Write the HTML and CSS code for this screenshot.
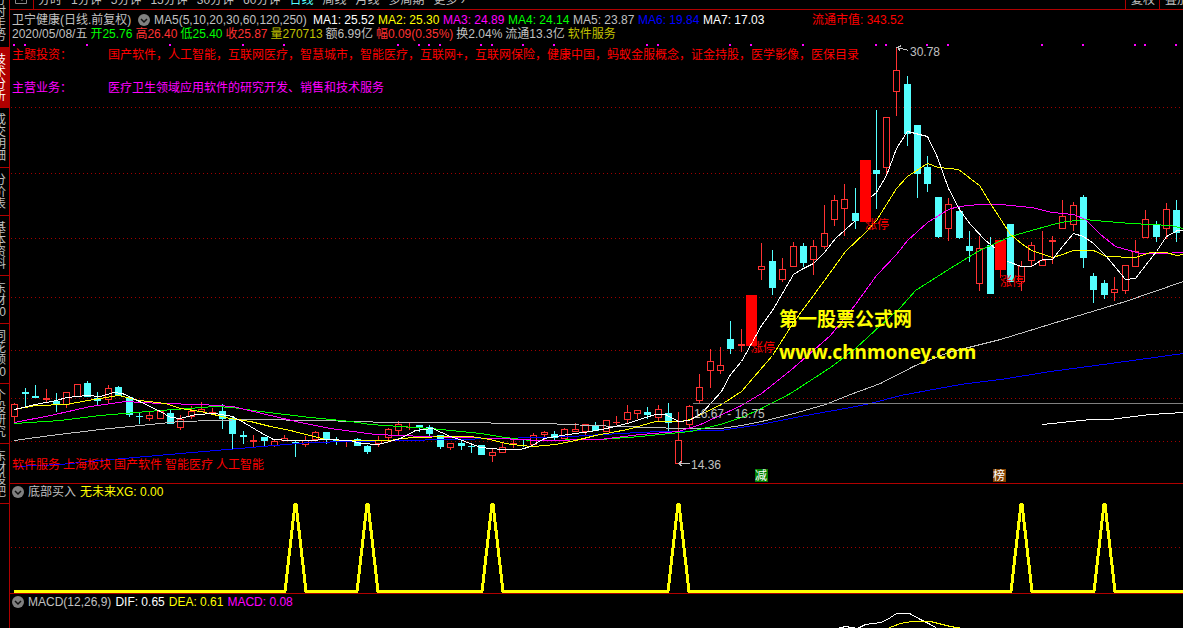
FILE: index.html
```html
<!DOCTYPE html>
<html lang="zh-CN">
<head>
<meta charset="utf-8">
<title>卫宁健康 日线</title>
<link rel="stylesheet" href="styles.css">
</head>
<body>
<div class="app">
  <nav class="side">
    <a href="#" class="side-item">分时走势</a>
    <a href="#" class="side-item active">技术分析</a>
    <a href="#" class="side-item">成交明细</a>
    <a href="#" class="side-item">分价表</a>
    <a href="#" class="side-item">基本资料</a>
    <a href="#" class="side-item">东财0</a>
    <a href="#" class="side-item">同花顺0</a>
    <a href="#" class="side-item">个股研究</a>
    <a href="#" class="side-item">东财股吧</a>
  </nav>
  <main class="main">
    <div class="toolbar">
      <button class="tool-icon" aria-label="窗口"><svg width="12" height="12" viewBox="0 0 12 12"><path d="M.5 0V11.5H11.5V0M3 7.5H8M7 5V9" fill="none" stroke="#888"/></svg></button>
      <div class="periods">
        <button>分时</button><button>1分钟</button><button>5分钟</button><button>15分钟</button><button>30分钟</button><button>60分钟</button><button class="on">日线</button><button>周线</button><button>月线</button><button>多周期</button><button>更多 ›</button>
      </div>
      <div class="adjust"><button>复权</button><button>叠加</button></div>
    </div>

    <section class="panel price">
      <svg class="plot" id="price" viewBox="10 10 1173 473" shape-rendering="crispEdges"></svg>
      <div class="overlay">
        <div class="row ma">
          <span class="name">卫宁健康(日线.前复权)</span>
          <button class="drop" aria-label="指标菜单"><svg width="12" height="12" viewBox="0 0 12 12"><circle cx="6" cy="6" r="6" fill="#808080"/><path d="M3 5L6 8L9 5" fill="none" stroke="#111" stroke-width="1.5"/></svg></button>
          <span class="params">MA5(5,10,20,30,60,120,250)</span>
          <span class="val white">MA1: 25.52</span><span class="val yellow">MA2: 25.30</span><span class="val magenta">MA3: 24.89</span><span class="val green">MA4: 24.14</span><span class="val">MA5: 23.87</span><span class="val blue">MA6: 19.84</span><span class="val white">MA7: 17.03</span>
          <span class="cap red">流通市值: 343.52</span>
        </div>
        <div class="row quote">
          <span>2020/05/08/五</span><span class="green">开25.76</span><span class="rise">高26.40</span><span class="green">低25.40</span><span class="rise">收25.87</span><span class="gold">量270713</span><span>额6.99亿</span><span class="rise">幅0.09(0.35%)</span><span>换2.04%</span><span>流通13.3亿</span><span class="gold">软件服务</span>
        </div>
        <dl class="facts">
          <div class="fact red"><dt>主题投资：</dt><dd>国产软件，人工智能，互联网医疗，智慧城市，智能医疗，互联网+，互联网保险，健康中国，蚂蚁金服概念，证金持股，医学影像，医保目录</dd></div>
          <div class="fact magenta"><dt>主营业务：</dt><dd>医疗卫生领域应用软件的研究开发、销售和技术服务</dd></div>
        </dl>
        <div class="tags red"><span>软件服务</span><span>上海板块</span><span>国产软件</span><span>智能医疗</span><span>人工智能</span></div>
      </div>
    </section>

    <section class="panel">
      <svg class="plot" id="signal" viewBox="10 484 1173 109" shape-rendering="crispEdges"></svg>
      <div class="overlay sub">
        <div class="row head">
          <button class="drop" aria-label="指标菜单"><svg width="12" height="12" viewBox="0 0 12 12"><circle cx="6" cy="6" r="6" fill="#808080"/><path d="M3 5L6 8L9 5" fill="none" stroke="#111" stroke-width="1.5"/></svg></button>
          <span>底部买入</span><span class="yellow">无未来XG: 0.00</span>
        </div>
      </div>
    </section>

    <section class="panel">
      <svg class="plot" id="macd" viewBox="10 594 1173 34" shape-rendering="crispEdges"></svg>
      <div class="overlay sub">
        <div class="row head">
          <button class="drop" aria-label="指标菜单"><svg width="12" height="12" viewBox="0 0 12 12"><circle cx="6" cy="6" r="6" fill="#808080"/><path d="M3 5L6 8L9 5" fill="none" stroke="#111" stroke-width="1.5"/></svg></button>
          <span>MACD(12,26,9)</span><span class="white">DIF: 0.65</span><span class="yellow">DEA: 0.61</span><span class="magenta">MACD: 0.08</span>
        </div>
      </div>
    </section>
  </main>
</div>
<script src="chart.js"></script>
</body>
</html>
```
FILE: styles.css
```css
* { box-sizing: border-box; }
body {
  margin: 0;
  background: #000;
  color: #c0c0c0;
  font: 12px/14px "Liberation Sans", "Noto Sans CJK SC", sans-serif;
  overflow: hidden;
}
button {
  border: 0;
  padding: 0;
  background: none;
  color: inherit;
  font: inherit;
}
.app { display: flex; height: 100vh; overflow: hidden; }

.side {
  flex: 0 0 10px;
  overflow: hidden;
  border-right: 1px solid #b00000;
}
.side-item {
  display: block;
  width: 18px;
  margin-left: -9px;
  padding: 6px 3px 5px;
  border-bottom: 1px solid #b00000;
  color: #c0c0c0;
  line-height: 12px;
  text-align: right;
  text-decoration: none;
  word-break: break-all;
}
.side-item:first-child { margin-top: -12px; }
.side-item.active { background: #b00000; color: #fff; }

.main { flex: 1; min-width: 0; }
.toolbar {
  display: flex;
  align-items: flex-end;
  height: 10px;
  overflow: hidden;
  border-bottom: 1px solid #b00000;
  white-space: nowrap;
}
.tool-icon {
  display: flex;
  padding: 0 6px 5px 5px;
  border-right: 1px solid #b00000;
}
.periods { display: flex; flex: 1; gap: 9px; padding: 0 4px 2px; }
.periods .on { color: #54ffff; }
.adjust { display: flex; margin-right: -10px; }
.adjust button { padding: 0 4px 2px 5px; border-left: 1px solid #b00000; }

.panel { display: grid; }
.panel + .panel { border-top: 1px solid #b00000; }
.plot, .overlay { grid-area: 1 / 1; min-width: 0; }
.plot { display: block; width: 100%; height: auto; }
.overlay {
  display: flex;
  flex-direction: column;
  padding: 3px 2px 11px;
  white-space: nowrap;
}
.sub { padding-top: 1px; }
.row { display: flex; align-items: center; height: 14px; }
.drop { display: flex; }
.name { flex: 0 0 126px; }
.params { flex: 0 0 163px; padding-left: 4px; }
.val { flex: 0 0 65px; }
.cap { margin-left: 44px; }
.quote { gap: 3px; }
.facts { margin: 7px 0 0; }
.fact { display: flex; margin-bottom: 19px; }
.fact dt { flex: 0 0 96px; }
.fact dd { margin: 0; }
.tags { display: flex; gap: 3px; margin-top: auto; }
.head { gap: 4px; }

.white { color: #fff; }
.yellow { color: #ff0; }
.magenta { color: #f0f; }
.green { color: #0f0; }
.blue { color: #00f; }
.red { color: #f00; }
.rise { color: #ff3232; }
.gold { color: #c0c000; }

.grid { stroke: #a00000; stroke-dasharray: 1 3; }
.line { fill: none; stroke-width: 1; }
.thick { fill: none; stroke-width: 3; stroke: #ff0; }
.up { fill: #000; stroke: #ff3232; }
.down { fill: #54ffff; stroke: #54ffff; }
.limit { fill: #f00; stroke: #f00; }
.label { fill: #c0c0c0; }
.hot { fill: #f00; }
.mark { fill: #fff; }
.site { fill: #ff0; font: bold 19px "Noto Sans", "Noto Sans CJK SC", sans-serif; }
```
FILE: chart.js
```js
const NS = 'http://www.w3.org/2000/svg';
const price = document.getElementById('price');
const signal = document.getElementById('signal');
const macd = document.getElementById('macd');

function add(parent, tag, attrs, text) {
  const el = document.createElementNS(NS, tag);
  for (const key in attrs) el.setAttribute(key, attrs[key]);
  if (text) el.textContent = text;
  parent.appendChild(el);
}
function grid(parent, y) {
  add(parent, 'path', { class: 'grid', d: `M11 ${y + 0.5}H1183` });
}
function line(parent, color, points) {
  add(parent, 'polyline', { class: 'line', stroke: color, points, transform: 'translate(0.5 0.5)' });
}

[107, 173, 238, 297, 350, 398, 441].forEach(y => grid(price, y));
grid(signal, 547);

[14, 25, 87, 170, 243, 284, 398, 419, 429, 440, 481, 492, 523, 554, 647, 658, 730, 751,
  803, 876, 886, 927, 948, 1042, 1083, 1135, 1145, 1176].forEach(x =>
  add(price, 'rect', { x: x - 1, y: 44, width: 2, height: 2, fill: '#f0f' }));

// x, kind (r rise, c fall, L limit-up), high, body top, body bottom, low
const candles = `14 r 403 404 416 423|25 c 388 392 393 405|35 c 385 396 397 397|46 r 389 398 399 402
56 c 393 401 403 411|66 r 392 392 404 407|77 r 384 384 396 396|87 c 381 383 396 396|97 c 392 398 400 404
108 r 385 388 399 402|118 c 386 387 395 395|129 c 397 397 414 416|139 c 413 416 416 423|149 r 412 415 418 420
160 r 411 411 418 418|170 c 410 413 423 423|180 r 415 419 427 429|191 r 406 411 416 418|201 r 402 409 411 411
212 r 408 412 413 413|222 c 404 411 418 428|232 c 417 418 433 448|243 c 431 435 436 443|253 r 435 440 441 446
264 c 437 437 440 446|274 r 440 441 445 446|284 r 435 438 440 440|295 c 440 442 442 456|305 r 436 440 444 446
315 r 431 432 439 439|326 c 432 432 438 443|336 c 437 440 440 444|346 r 440 440 441 446|357 c 438 439 445 445
367 c 445 446 451 453|378 r 436 440 443 446|388 r 428 429 437 440|398 r 421 424 430 434|409 r 423 427 427 429
419 c 425 425 426 431|429 c 425 427 433 435|440 c 435 435 446 448|450 r 443 443 447 449|461 c 441 443 445 449
471 c 445 446 446 452|481 c 445 445 454 454|492 r 449 452 455 461|502 r 443 447 452 452|513 r 440 443 443 447
523 c 439 439 439 446|533 r 433 435 444 444|544 r 431 432 434 439|554 c 431 434 437 440|564 r 428 429 438 438
575 r 423 429 431 431|585 r 424 424 431 435|595 c 422 426 430 430|606 r 420 420 431 431|616 r 416 422 422 424
627 r 405 412 419 422|637 r 410 410 413 418|647 c 407 412 414 418|658 r 405 409 417 421|668 c 403 413 422 430
678 r 412 440 463 463|689 r 405 406 424 428|699 r 374 387 400 402|710 r 349 361 370 387|720 r 347 365 370 373
730 c 321 339 348 353|741 r 329 344 345 351|751 L 295 295 345 345|761 r 243 266 269 279|772 c 250 261 287 294
782 r 258 269 279 281|793 r 242 246 266 266|803 c 243 246 262 266|813 r 240 246 259 274|824 r 205 233 246 248
834 r 195 200 219 225|844 r 184 199 208 235|855 c 188 213 220 228|865 L 160 160 221 221|876 c 110 170 173 208
886 r 117 117 167 173|896 r 47 70 91 115|907 c 76 84 133 145|917 c 125 125 173 197|927 c 156 167 183 191
938 c 197 197 236 237|948 r 198 204 228 240|959 c 206 211 237 238|969 c 231 246 250 261|979 r 236 248 283 290
990 c 237 245 293 293|1000 L 240 240 269 277|1010 c 224 224 281 281|1021 r 261 266 281 290|1031 r 242 245 260 265
1042 r 231 260 265 265|1052 r 236 240 241 263|1062 r 200 216 228 228|1073 r 202 205 224 230|1083 c 195 197 257 267
1093 c 273 276 289 302|1104 c 280 283 294 298|1114 r 277 289 292 300|1125 r 265 265 290 293|1135 r 240 251 266 266
1145 r 210 219 237 237|1156 c 221 224 236 241|1166 r 203 209 228 238|1176 c 200 210 232 241`;

candles.split(/[|\n]/).forEach(row => {
  const [xs, kind, ...rest] = row.split(' ');
  const x = +xs;
  const [high, top, bottom, low] = rest.map(Number);
  const half = kind === 'L' ? 5 : 3;
  const cls = { r: 'up', c: 'down', L: 'limit' }[kind];
  add(price, 'path', { class: cls, d: `M${x + 0.5} ${high}V${low + 1}` });
  add(price, 'rect', { class: cls, x: x - half + 0.5, y: top + 0.5, width: half * 2, height: bottom - top || 0.1 });
});

line(price, '#00f', '14,466 60,464 100,460 180,453 250,447 310,442 350,441 400,440 450,439 500,438 570,436 620,433 660,431 720,430 760,424 800,416 850,407 870,403 900,395 960,384 1000,379 1050,371 1110,363 1183,353');
line(price, '#c0c0c0', '14,440 50,435 100,429 140,425 180,421 250,419 320,420 390,422 480,422 500,423 545,423 590,425 650,427 680,428 720,428 741,425 761,421 790,414 825,404 850,394 880,383 915,365 948,352 1000,339 1062,320 1125,301 1183,281');
line(price, '#0f0', '14,423 60,420 100,415 160,410 215,406 232,407 260,411 310,417 350,421 370,424 430,428 480,433 505,437 530,440 600,439 640,436 690,431 720,424 741,417 761,408 790,393 830,367 855,348 880,325 900,307 915,290 948,269 979,250 1010,236 1031,230 1060,222 1083,219 1130,223 1170,225 1183,228');
line(price, '#f0f', '14,422 50,415 90,406 125,401 160,403 200,404 232,406 270,415 300,422 330,428 375,434 425,436 460,437 500,438 540,440 600,439 640,434 678,431 700,424 741,405 761,393 790,370 830,335 855,304 876,275 896,254 907,240 927,222 948,209 958,206 979,204 1000,204 1031,207 1052,212 1073,214 1085,219 1100,234 1115,246 1140,253 1160,253 1183,252');
line(price, '#ff0', '14,409 35,405 66,404 87,400 118,395 139,400 165,403 180,408 200,411 230,418 250,421 270,426 290,430 325,439 345,440 390,440 400,438 415,437 450,436 470,436 490,439 505,443 520,445 533,446 555,444 575,440 595,435 627,429 655,421 680,421 690,419 721,404 741,391 772,355 793,322 824,280 845,251 865,232 876,220 896,188 907,176 927,163 938,167 958,169 979,185 990,203 1010,234 1021,243 1031,250 1052,257 1062,254 1073,250 1093,250 1106,256 1135,257 1150,252 1166,252 1176,255 1183,254');
line(price, '#fff', '14,409 35,404 56,400 66,397 87,395 100,396 113,392 122,393 139,401 160,411 170,417 180,418 195,414 215,413 232,416 245,423 260,432 273,439 290,440 310,440 326,439 350,440 360,443 378,444 400,438 415,430 432,428 450,436 462,440 480,447 502,449 520,449 530,446 544,438 555,436 575,433 590,431 606,428 627,423 645,417 655,414 665,414 678,421 689,420 702,412 721,391 730,374 741,361 750,345 761,325 772,310 793,274 803,268 813,263 824,252 835,238 855,220');
line(price, '#fff', '871,196 876,192 886,175 896,148 907,131 927,136 937,157 948,188 959,209 970,224 985,240 995,248');
line(price, '#fff', '1007,261 1021,266 1031,266 1042,259 1052,259 1062,246 1073,233 1083,236 1093,243 1106,256 1125,279 1135,278 1145,265 1156,251 1166,236 1177,230 1183,230');
line(price, '#fff', '1042,424 1090,419 1110,419 1150,414 1183,412');
line(price, '#808080', '692,403 1183,403');
line(price, '#c0c0c0', '689,463 678,463 682,460 678,463 682,466');
line(price, '#c0c0c0', '908,50 897,47 901,45 897,47 900,51');

const texts = [
  [694, 418, 'label', '16.67 - 16.75'], [691, 469, 'label', '14.36'], [910, 56, 'label', '30.78'],
  [751, 352, 'hot', '涨停'], [865, 229, 'hot', '涨停'], [1000, 286, 'hot', '涨停'],
  [779, 326, 'site', '第一股票公式网'], [779, 359, 'site', 'www.chnmoney.com']
];
texts.forEach(([x, y, cls, text]) => add(price, 'text', { x, y, class: cls }, text));
[[755, '#008000', '减'], [993, '#804000', '榜']].forEach(([x, fill, text]) => {
  add(price, 'rect', { x, y: 469, width: 13, height: 13, fill });
  add(price, 'text', { x, y: 480, class: 'mark' }, text);
});

const peaks = [295, 367, 492, 678, 1021, 1104];
add(signal, 'path', {
  class: 'thick',
  d: 'M14 591.5' + peaks.map(x => `H${x - 10}L${x} 504H${x + 1}L${x + 11} 591.5`).join('') + 'H1183'
});

line(macd, '#fff', '837,628 845,626 857,628 865,624 880,622 887,619 896,613 909,613 920,619 930,624 940,630');
line(macd, '#ff0', '887,628 900,623 912,621 930,621 950,626 962,628');
```
